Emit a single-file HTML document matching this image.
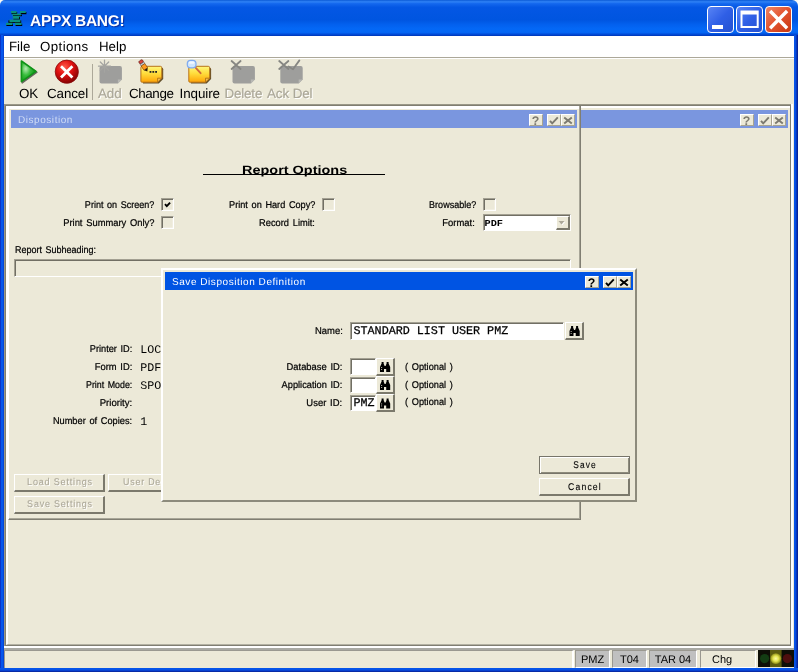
<!DOCTYPE html>
<html>
<head>
<meta charset="utf-8">
<title>APPX BANG!</title>
<style>
html,body{margin:0;padding:0;}
body{width:798px;height:672px;overflow:hidden;background:#ece9d8;font-family:"Liberation Sans",sans-serif;}
#w{position:relative;width:798px;height:672px;overflow:hidden;background:#ece9d8;will-change:transform;text-rendering:geometricPrecision;}
#w *{box-sizing:border-box;}
.a{position:absolute;white-space:nowrap;}
/* window chrome */
#tb{left:0;top:0;width:798px;height:36px;border-radius:5px 6px 0 0;
 background:linear-gradient(180deg,#0b5ad6 0%,#2f82f6 5%,#1468ee 10%,#0457e4 20%,#0055e0 55%,#0360ee 68%,#0468f6 80%,#0466f4 90%,#0048d4 96%,#0036b4 100%);}
#bl{left:0;top:35px;width:4px;height:637px;background:linear-gradient(90deg,#0a34c8 0,#0a34c8 1px,#0656ec 1px,#0656ec 3px,#0446d6 3px);}
#br{left:794px;top:35px;width:4px;height:637px;background:linear-gradient(90deg,#0a50e0 0,#0656ec 1px,#0446d6 2px,#0a2aa8 3px,#061e8a 4px);}
#bb{left:0;top:668px;width:798px;height:4px;background:linear-gradient(180deg,#0656ec 0,#0650e4 2px,#0a34c0 3px,#06208c 4px);}
#menu{left:4px;top:36px;width:790px;height:21px;background:#fff;}
.mi{top:39px;font-size:13.3px;line-height:16px;color:#000;letter-spacing:0;}
.tl{font-size:13.4px;line-height:15px;color:#000;margin-top:0.8px;letter-spacing:-0.1px;}
#w .dis{color:#aca899;text-shadow:1px 1px 0 #fff;-webkit-text-stroke:0.2px #aca899;}
.lb{font-size:9.8px;line-height:12px;color:#000;-webkit-text-stroke:0.22px #000;}
.mono{font-family:"Liberation Mono",monospace;font-size:11.67px;line-height:12px;color:#000;}
.hl{background:#aca899;}
.wl{background:#fff;}
/* small caption button */
.cb{width:14px;height:12px;background:#ece9d8;border-left:1px solid #fff;border-top:1px solid #fff;border-right:1px solid #a8a490;border-bottom:1px solid #a8a490;}
/* checkbox */
.ck{width:13px;height:13px;background:#ece9d8;border-left:1px solid #a3a092;border-top:1px solid #a3a092;border-right:1px solid #fff;border-bottom:1px solid #fff;box-shadow:inset 1px 1px 0 #716f64,inset -0.5px -0.5px 0 #f6f4ea;}
/* sunken input */
.inp{background:#fff;border-left:1px solid #a3a092;border-top:1px solid #a3a092;border-right:1px solid #fff;border-bottom:1px solid #fff;box-shadow:inset 1px 1px 0 #716f64;}
/* raised button */
.btn{background:#ece9d8;border-left:1px solid #fff;border-top:1px solid #fff;border-right:2px solid #7b796c;border-bottom:2px solid #7b796c;}
.btn.def{border:1px solid #77756a;box-shadow:inset 1px 1px 0 #fff,inset -1px -1px 0 #8d8b7c;}
#w .lb.c{-webkit-text-stroke:0.1px #000;}
#w .lb.c.dis{-webkit-text-stroke:0.1px #aca899;}
</style>
</head>
<body>
<div id="w">
<!-- TITLE BAR -->
<div class="a" style="left:0;top:0;width:8px;height:8px;background:#fbfaf4;"></div><div class="a" style="left:790px;top:0;width:8px;height:8px;background:#fbfaf4;"></div>
<div class="a" id="tb"></div>
<div class="a" id="bl"></div>
<div class="a" id="br"></div>
<div class="a" id="bb"></div>
<div class="a" id="title" style="left:30px;top:12.5px;font-size:15.5px;line-height:18px;letter-spacing:-0.3px;font-weight:bold;color:#fff;text-shadow:1px 1px 1px #0a2a9a;">APPX BANG!</div>
<!-- MENU -->
<div class="a" id="menu"></div>
<div class="a mi" style="left:9px;">File</div>
<div class="a mi" style="left:40px;letter-spacing:0.4px;">Options</div>
<div class="a mi" style="left:99px;">Help</div>


<!-- PANEL 2 (background frame) -->
<div class="a" style="left:4px;top:104px;width:789px;height:544px;background:#fff;"></div>
<div class="a" style="left:4px;top:104px;width:787px;height:542px;background:#807e72;border-left:1px solid #9a9888;border-top:1px solid #9a9888;"></div>
<div class="a" style="left:6px;top:106px;width:784px;height:539px;background:#ece9d8;border-left:2px solid #fff;border-top:2px solid #fff;border-bottom:1px solid #b4b2a4;"></div>
<div class="a" style="left:4px;top:648px;width:790px;height:2px;background:#a9a9a3;"></div>
<!-- panel 2 header -->
<div class="a" style="left:581px;top:110px;width:207px;height:18px;background:#7a96df;"></div>
<div class="a cb" style="left:740px;top:114px;"></div>
<div class="a cb" style="left:758px;top:114px;"></div>
<div class="a cb" style="left:772px;top:114px;"></div>
<!-- PANEL 1 (Disposition) -->
<div class="a" id="p1" style="left:8px;top:108px;width:573px;height:412px;background:#ece9d8;border-left:1px solid #fff;border-top:1px solid #fff;border-right:1px solid #807e72;border-bottom:1px solid #807e72;"></div>
<div class="a" style="left:579px;top:106px;width:1px;height:413px;background:#a8a698;"></div><div class="a" style="left:580px;top:106px;width:1px;height:3px;background:#807e72;"></div>
<div class="a" style="left:9px;top:518px;width:571px;height:1px;background:#a8a698;"></div>
<div class="a" style="left:11px;top:110px;width:566px;height:18px;background:#7a96df;"></div>
<div class="a" style="left:18px;top:115px;font-size:10px;line-height:12px;letter-spacing:0.55px;color:#d2ddf5;">Disposition</div>
<div class="a cb" style="left:529px;top:114px;"></div>
<div class="a cb" style="left:547px;top:114px;"></div>
<div class="a cb" style="left:561px;top:114px;"></div>

<!-- PANEL 1 CONTENT -->
<div class="a" id="ro" style="left:241.5px;top:163px;font-size:12px;line-height:14px;font-weight:bold;color:#000;transform:scaleX(1.205);transform-origin:0 50%;">Report Options</div>
<div class="a" style="left:203px;top:174px;width:182px;height:1px;background:#000;"></div>
<div class="a ck" style="left:161px;top:198px;"></div>
<div class="a ck" style="left:161px;top:216px;"></div>
<div class="a ck" style="left:322px;top:198px;"></div>
<div class="a ck" style="left:483px;top:198px;"></div>
<svg class="a" style="left:163px;top:200px;" width="9" height="9" viewBox="0 0 9 9"><path d="M2,4.2 L3.8,6.2 L7.1,2.7" stroke="#000" stroke-width="1.9" fill="none"/></svg>
<div class="a inp" style="left:483px;top:214px;width:88px;height:17px;"></div>
<div class="a" style="left:484.5px;top:217.9px;font-family:'Liberation Mono',monospace;font-weight:bold;font-size:10.3px;line-height:12px;color:#000;transform:scaleY(.9);transform-origin:0 100%;">PDF</div>
<div class="a btn" style="left:556px;top:216px;width:14px;height:14px;"></div>
<svg class="a" style="left:557px;top:219px;" width="10" height="8" viewBox="0 0 10 8"><path d="M2.3,2.8 H8.3 L5.3,6.2 Z" fill="#fff"/><path d="M1.5,2 H7.5 L4.5,5.4 Z" fill="#aca899"/></svg>
<div class="a inp" style="left:14px;top:259px;width:557px;height:18px;background:#ece9d8;"></div>
<div class="a mono" style="left:140.3px;top:344.1px;">LOC</div>
<div class="a mono" style="left:140.3px;top:362.1px;">PDF</div>
<div class="a mono" style="left:140.3px;top:380.1px;">SPO</div>
<div class="a mono" style="left:140.3px;top:416.1px;">1</div>
<div class="a btn" style="left:14px;top:474px;width:91px;height:18px;"></div>
<div class="a btn" style="left:108px;top:474px;width:91px;height:18px;"></div>
<div class="a btn" style="left:14px;top:496px;width:91px;height:18px;"></div>

<div class="a lb " id="L0" style="right:643.80px;top:200.40px;transform:scaleX(0.9221);transform-origin:100% 50%;word-spacing:1.2px;"><span>Print on Screen?</span></div>
<div class="a lb " id="L1" style="right:643.80px;top:218.40px;transform:scaleX(0.9560);transform-origin:100% 50%;word-spacing:1.2px;"><span>Print Summary Only?</span></div>
<div class="a lb " id="L2" style="right:483.00px;top:200.40px;transform:scaleX(0.9342);transform-origin:100% 50%;word-spacing:1.2px;"><span>Print on Hard Copy?</span></div>
<div class="a lb " id="L3" style="right:483.30px;top:218.40px;transform:scaleX(0.9470);transform-origin:100% 50%;word-spacing:1.2px;"><span>Record Limit:</span></div>
<div class="a lb " id="L4" style="right:322.20px;top:200.40px;transform:scaleX(0.9199);transform-origin:100% 50%;word-spacing:1.2px;"><span>Browsable?</span></div>
<div class="a lb " id="L5" style="right:323.00px;top:218.40px;transform:scaleX(0.9630);transform-origin:100% 50%;word-spacing:1.2px;"><span>Format:</span></div>
<div class="a lb " id="L6" style="left:14.70px;top:244.60px;transform:scaleX(0.9178);transform-origin:0 50%;word-spacing:1.2px;"><span>Report Subheading:</span></div>
<div class="a lb " id="L7" style="right:665.80px;top:344.30px;transform:scaleX(0.9383);transform-origin:100% 50%;word-spacing:1.2px;"><span>Printer ID:</span></div>
<div class="a lb " id="L8" style="right:665.80px;top:362.30px;transform:scaleX(0.9543);transform-origin:100% 50%;word-spacing:1.2px;"><span>Form ID:</span></div>
<div class="a lb " id="L9" style="right:665.80px;top:380.40px;transform:scaleX(0.9026);transform-origin:100% 50%;word-spacing:1.2px;"><span>Print Mode:</span></div>
<div class="a lb " id="L10" style="right:665.80px;top:398.40px;transform:scaleX(0.9784);transform-origin:100% 50%;word-spacing:1.2px;"><span>Priority:</span></div>
<div class="a lb " id="L11" style="right:665.80px;top:416.40px;transform:scaleX(0.9420);transform-origin:100% 50%;word-spacing:1.2px;"><span>Number of Copies:</span></div>
<div class="a lb dis c" id="L12" style="left:-40.30px;width:200px;text-align:center;top:476.60px;transform:scaleX(0.9187);transform-origin:50% 50%;letter-spacing:0.9px;"><span>Load Settings</span></div>
<div class="a lb dis c" id="L13" style="left:54.80px;width:200px;text-align:center;top:476.60px;transform:scaleX(0.8980);transform-origin:50% 50%;letter-spacing:0.9px;"><span>User Defaults</span></div>
<div class="a lb dis c" id="L14" style="left:-40.30px;width:200px;text-align:center;top:498.60px;transform:scaleX(0.9119);transform-origin:50% 50%;letter-spacing:0.9px;"><span>Save Settings</span></div>
<!-- DIALOG -->
<div class="a" id="dlg" style="left:161px;top:268px;width:476px;height:234px;background:#ece9d8;border-left:2px solid #fff;border-top:2px solid #fff;border-right:2px solid #8d8b7c;border-bottom:2px solid #8d8b7c;"></div>
<div class="a" style="left:165px;top:272px;width:468px;height:18px;background:#0054e3;"></div>
<div class="a" style="left:172px;top:277px;font-size:10px;line-height:12px;letter-spacing:0.55px;color:#fff;">Save Disposition Definition</div>
<div class="a cb" style="left:585px;top:276px;"></div>
<div class="a cb" style="left:603px;top:276px;"></div>
<div class="a cb" style="left:617px;top:276px;"></div>
<div class="a inp" style="left:350px;top:322px;width:214px;height:18px;"></div>
<div class="a mono" style="left:353.5px;top:324.7px;-webkit-text-stroke:0.25px #000;font-size:11.72px;">STANDARD LIST USER PMZ</div>
<div class="a btn" style="left:565px;top:322px;width:19px;height:18px;"></div>
<div class="a inp" style="left:350px;top:358px;width:26px;height:17px;"></div>
<div class="a btn" style="left:376px;top:358px;width:19px;height:18px;"></div>
<div class="a inp" style="left:350px;top:377px;width:26px;height:16px;"></div>
<div class="a btn" style="left:376px;top:376px;width:19px;height:18px;"></div>
<div class="a inp" style="left:350px;top:395px;width:26px;height:16px;"></div>
<div class="a btn" style="left:376px;top:394px;width:19px;height:18px;"></div>
<div class="a mono" style="left:353.5px;top:396.9px;-webkit-text-stroke:0.25px #000;">PMZ</div>
<div class="a btn def" style="left:539px;top:456px;width:91px;height:18px;"></div>
<div class="a btn" style="left:539px;top:478px;width:91px;height:18px;"></div>

<!-- STATUS BAR -->
<div class="a" style="left:4px;top:650px;width:570px;height:18px;background:#ece9d8;border-top:1px solid #9a9890;border-left:1px solid #9a9890;border-right:2px solid #fff;"></div>
<div class="a" style="left:575px;top:650px;width:35px;height:18px;background:#c0c0c0;border-left:1px solid #9a9890;border-top:1px solid #9a9890;border-right:1px solid #fff;border-bottom:1px solid #fff;font-size:11px;line-height:18px;text-align:center;color:#000;">PMZ</div>
<div class="a" style="left:612px;top:650px;width:35px;height:18px;background:#c0c0c0;border-left:1px solid #9a9890;border-top:1px solid #9a9890;border-right:1px solid #fff;border-bottom:1px solid #fff;font-size:11px;line-height:18px;text-align:center;color:#000;">T04</div>
<div class="a" style="left:649px;top:650px;width:48px;height:18px;background:#c0c0c0;border-left:1px solid #9a9890;border-top:1px solid #9a9890;border-right:1px solid #fff;border-bottom:1px solid #fff;font-size:11px;line-height:18px;text-align:center;color:#000;">TAR 04</div>
<div class="a" style="left:700px;top:650px;width:56px;height:18px;background:#ece9d8;border-left:1px solid #9a9890;border-top:1px solid #9a9890;border-right:1px solid #fff;border-bottom:1px solid #fff;font-size:11px;line-height:18px;color:#000;padding-left:11px;">Chg</div>
<svg class="a" style="left:758px;top:650px;" width="36" height="17" viewBox="0 0 36 17"><defs><radialGradient id="yl"><stop offset="0" stop-color="#fbfba8"/><stop offset="0.5" stop-color="#e6e650"/><stop offset="1" stop-color="#8c8c18"/></radialGradient></defs><rect width="36" height="17" fill="#0e0e06"/><rect x="12" y="0" width="11.6" height="17" fill="#5c5c10"/><circle cx="6.6" cy="8.6" r="4.6" fill="#133c13"/><circle cx="17.8" cy="8.6" r="5.4" fill="url(#yl)"/><circle cx="29.4" cy="8.6" r="4.6" fill="#4e0e0e"/></svg>

<div class="a lb " id="L15" style="right:455.50px;top:326.40px;transform:scaleX(0.9633);transform-origin:100% 50%;word-spacing:1.2px;"><span>Name:</span></div>
<div class="a lb " id="L16" style="right:455.50px;top:362.20px;transform:scaleX(0.9556);transform-origin:100% 50%;word-spacing:1.2px;"><span>Database ID:</span></div>
<div class="a lb " id="L17" style="right:455.50px;top:380.40px;transform:scaleX(0.9445);transform-origin:100% 50%;word-spacing:1.2px;"><span>Application ID:</span></div>
<div class="a lb " id="L18" style="right:455.50px;top:398.30px;transform:scaleX(0.9639);transform-origin:100% 50%;word-spacing:1.2px;"><span>User ID:</span></div>
<div class="a lb " id="L19" style="left:405.10px;top:361.70px;transform:scaleX(0.9398);transform-origin:0 50%;word-spacing:1.2px;"><span>( Optional )</span></div>
<div class="a lb " id="L20" style="left:405.10px;top:379.50px;transform:scaleX(0.9398);transform-origin:0 50%;word-spacing:1.2px;"><span>( Optional )</span></div>
<div class="a lb " id="L21" style="left:405.10px;top:397.40px;transform:scaleX(0.9398);transform-origin:0 50%;word-spacing:1.2px;"><span>( Optional )</span></div>
<div class="a lb c" id="L22" style="left:484.80px;width:200px;text-align:center;top:460.40px;transform:scaleX(0.8536);transform-origin:50% 50%;letter-spacing:1.3px;"><span>Save</span></div>
<div class="a lb c" id="L23" style="left:484.90px;width:200px;text-align:center;top:482.40px;transform:scaleX(0.8826);transform-origin:50% 50%;letter-spacing:1.3px;"><span>Cancel</span></div>
<!-- TOOLBAR -->
<div class="a" style="left:4px;top:57px;width:790px;height:1px;background:#aca899;"></div>
<div class="a" style="left:4px;top:58px;width:790px;height:1px;background:#fff;"></div>
<svg class="a" style="left:0;top:56px;" width="798" height="48" viewBox="0 56 798 48">
<defs>
<radialGradient id="gG" cx="0.3" cy="0.38" r="0.7"><stop offset="0" stop-color="#b4eab0"/><stop offset="0.45" stop-color="#38bc3c"/><stop offset="1" stop-color="#0c9416"/></radialGradient>
<radialGradient id="gR" cx="0.4" cy="0.3" r="0.75"><stop offset="0" stop-color="#ff5a4a"/><stop offset="0.45" stop-color="#e01010"/><stop offset="1" stop-color="#7a0000"/></radialGradient>
<linearGradient id="gY" x1="0" y1="0" x2="0" y2="1"><stop offset="0" stop-color="#fff67a"/><stop offset="0.45" stop-color="#ffdc3c"/><stop offset="1" stop-color="#ffa406"/></linearGradient>
<g id="note"><path d="M2.6,2 H21.2 Q22.8,2 22.8,3.4 V13.2 L18.4,17.8 H2.6 Z" fill="#4e360c" opacity="0.85"/><path d="M1.5,0.5 H20 Q21.4,0.5 21.4,2 V12.4 L17.2,16.4 H1.5 Q0.5,16.4 0.5,15.4 V1.5 Q0.5,0.5 1.5,0.5 Z" fill="url(#gY)" stroke="#b8741a" stroke-width="1"/><path d="M21.4,12.4 L17.2,16.4 L17.2,12.4 Z" fill="#f4c050" stroke="#a86812" stroke-width="0.8"/></g>
<g id="gnote"><path d="M2,0 H20.5 Q22.4,0 22.4,2 V13.5 L18.4,17.5 H2 Q0,17.5 0,15.5 V2 Q0,0 2,0 Z" fill="#9e9e9c"/><path d="M22.4,13.5 L18.4,17.5 L18.4,13.5 Z" fill="#b8b8b4"/></g>
</defs>
<!-- OK -->
<path d="M22.2,62.2 L37,72.3 L22.2,82.9 Z" fill="#3c3c38" opacity="0.75" stroke="#3c3c38" stroke-width="1.4" stroke-linejoin="round"/>
<path d="M21.4,61 L36,71.3 L21.4,81.6 Z" fill="url(#gG)" stroke="#109418" stroke-width="1.6" stroke-linejoin="round"/>
<!-- Cancel -->
<circle cx="66.8" cy="71.7" r="11.6" fill="url(#gR)" stroke="#8a0a0a" stroke-width="0.8"/>
<path d="M61,66.2 L72.4,77.4 M72.4,66.2 L61,77.4" stroke="#fff" stroke-width="2.8" stroke-linecap="butt"/>
<!-- separator -->
<rect x="92" y="64" width="1" height="36" fill="#aca899"/>
<!-- Add -->
<use href="#gnote" x="99.5" y="66"/>
<g stroke="#a4a4a0" stroke-width="1.3" stroke-linecap="round"><path d="M104.5,60.2 V72.2 M98.5,66.2 H110.5 M100.3,62 L108.7,70.4 M108.7,62 L100.3,70.4"/></g>
<!-- Change -->
<use href="#note" x="140.4" y="65.8"/>
<rect x="149.6" y="71" width="1.8" height="1.8" fill="#222"/><rect x="152.4" y="71" width="1.8" height="1.8" fill="#222"/><rect x="155.2" y="71" width="1.8" height="1.8" fill="#222"/>
<g transform="translate(140.4,61.3) rotate(-33)"><rect x="-1.9" y="-0.8" width="4.4" height="3.2" rx="1.3" fill="#d8453c" stroke="#5a1410" stroke-width="0.6"/><rect x="-1.9" y="2.4" width="4.4" height="2" fill="#c8c8d0" stroke="#555" stroke-width="0.5"/><rect x="-1.9" y="4.4" width="4.4" height="5" fill="#ff9a1e" stroke="#7a4206" stroke-width="0.6"/><path d="M-1.9,9.4 L0.3,12.4 L2.5,9.4 Z" fill="#2a1a0a"/></g>
<!-- Inquire -->
<use href="#note" x="188.3" y="65.8"/>
<path d="M195.8,67.8 L200.6,73.2" stroke="#d0683a" stroke-width="1.9" stroke-linecap="round"/>
<rect x="187.3" y="60.3" width="8.7" height="7.6" rx="3.3" fill="#d0e6fc" stroke="#7eaaf0" stroke-width="1.2"/><rect x="189" y="61.6" width="5.4" height="2.2" rx="1" fill="#f2f8ff"/>
<!-- Delete -->
<use href="#gnote" x="232.5" y="66"/>
<path d="M231.6,61 L240.6,69 M240.6,61 L231.6,69" stroke="#868682" stroke-width="1.8" stroke-linecap="round"/>
<!-- Ack Del -->
<use href="#gnote" x="280.3" y="66"/>
<path d="M279.2,61 L288.4,69 M288.4,61 L279.2,69" stroke="#868682" stroke-width="1.8" stroke-linecap="round"/>
<path d="M288.5,66.5 L293,69.2 L299.4,60.4" stroke="#868682" stroke-width="1.8" fill="none" stroke-linecap="round" stroke-linejoin="round"/>
</svg>
<div class="a tl" style="left:19px;top:85px;">OK</div>
<div class="a tl" style="left:47px;top:85px;">Cancel</div>
<div class="a tl dis" style="left:98px;top:85px;">Add</div>
<div class="a tl" style="left:129px;top:85px;letter-spacing:-0.4px;">Change</div>
<div class="a tl" style="left:179.6px;top:85px;letter-spacing:-0.1px;">Inquire</div>
<div class="a tl dis" style="left:224.4px;top:85px;letter-spacing:-0.15px;">Delete</div>
<div class="a tl dis" style="left:267px;top:85px;">Ack Del</div>

<!-- GLYPHS -->
<svg class="a" style="left:0;top:0;" width="798" height="672" viewBox="0 0 798 672">
<defs>
<g id="q"><text x="6.6" y="10.8" text-anchor="middle" font-family="Liberation Sans, sans-serif" font-weight="bold" font-size="12.4" stroke="none">?</text></g>
<g id="chk"><path d="M3,6.8 L5.2,9.4 L10.8,3.4" fill="none" stroke-width="1.9"/></g>
<g id="xx"><path d="M3.2,3.4 L10.8,9.6 M10.8,3.4 L3.2,9.6" fill="none" stroke-width="1.9"/></g>
<g id="bino"><path d="M1.6,0 H3.6 V1.4 L4.6,4 H5.6 L6.6,1.4 V0 H8.6 V1.4 L10.2,5 V10 H6.2 V7 H4 V10 H0 V5 L1.6,1.4 Z" fill="#000"/><rect x="1.2" y="5" width="0.9" height="0.9" fill="#ece9d8"/><rect x="1.2" y="7" width="0.9" height="0.9" fill="#ece9d8"/></g>
</defs>
<!-- panel 1 caption glyphs (inactive, gray) -->
<g stroke="#7c7a70" fill="#7c7a70"><use href="#q" x="529" y="114"/><use href="#chk" x="547" y="114"/><use href="#xx" x="561" y="114"/>
<use href="#q" x="740" y="114"/><use href="#chk" x="758" y="114"/><use href="#xx" x="772" y="114"/></g>
<!-- dialog caption glyphs -->
<g stroke="#000" fill="#000"><use href="#q" x="585" y="276"/><use href="#chk" x="603" y="276"/><use href="#xx" x="617" y="276"/></g>
<use href="#bino" x="569.5" y="326"/>
<use href="#bino" x="380" y="362"/><use href="#bino" x="380" y="380"/><use href="#bino" x="380" y="398.5"/>
<!-- app logo -->
<g>
<g fill="#000"><rect x="11.6" y="12" width="5.6" height="2.2"/><rect x="20.6" y="12" width="5.8" height="2.2"/><rect x="13" y="14.6" width="9" height="1.6"/><rect x="13.4" y="17" width="6.6" height="2.6"/><rect x="8.4" y="20.4" width="12.8" height="2.6"/><rect x="6.4" y="23.6" width="6.6" height="2.4"/><rect x="15.6" y="23.6" width="6.6" height="2.4"/></g>
<g fill="#0a9080"><rect x="11" y="11" width="5.6" height="2"/><rect x="20" y="11" width="5.8" height="2"/><rect x="12.2" y="13.6" width="9" height="1.8"/><rect x="12.8" y="16" width="6.4" height="2.8"/><rect x="9.4" y="19.6" width="11" height="2.6"/><rect x="6" y="22.8" width="6.4" height="2.2"/><rect x="15" y="22.8" width="6.6" height="2.2"/></g>
</g>
<!-- window buttons -->
<defs>
<linearGradient id="wbB" x1="0" y1="0" x2="1" y2="1"><stop offset="0" stop-color="#5a86f6"/><stop offset="0.5" stop-color="#2f5fe6"/><stop offset="1" stop-color="#2450d0"/></linearGradient>
<linearGradient id="wbR" x1="0" y1="0" x2="1" y2="1"><stop offset="0" stop-color="#f08868"/><stop offset="0.5" stop-color="#e2522e"/><stop offset="1" stop-color="#c43612"/></linearGradient>
</defs>
<rect x="707.5" y="6.5" width="26" height="26" rx="3.5" fill="url(#wbB)" stroke="#fff" stroke-width="1"/>
<rect x="736.5" y="6.5" width="26" height="26" rx="3.5" fill="url(#wbB)" stroke="#fff" stroke-width="1"/>
<rect x="765.5" y="6.5" width="26" height="26" rx="3.5" fill="url(#wbR)" stroke="#fff" stroke-width="1"/>
<rect x="712" y="25" width="11" height="4" fill="#fff"/>
<path d="M740.5,10.4 H758.7 V28 H740.5 Z M742.5,14.5 V26 H756.7 V14.5 Z" fill="#fff" fill-rule="evenodd"/>
<path d="M770.1,11 L787.1,28.2 M787.1,11 L770.1,28.2" stroke="#fff" stroke-width="3.4"/>
</svg>
</div>
</body>
</html>
